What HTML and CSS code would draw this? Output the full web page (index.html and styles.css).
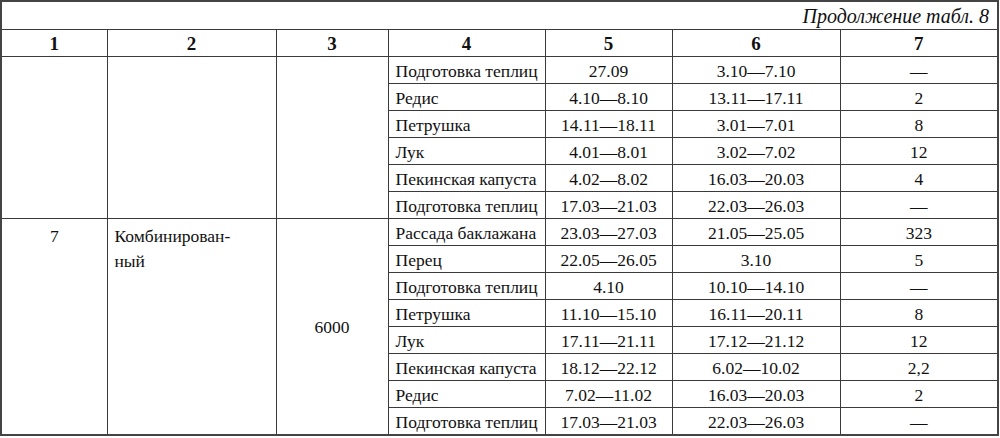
FILE: index.html
```html
<!DOCTYPE html>
<html lang="ru">
<head>
<meta charset="utf-8">
<link rel="stylesheet" href="styles.css">
</head>
<body>
<table class="tbl">
  <colgroup>
    <col class="c1"><col class="c2"><col class="c3"><col class="c4"><col class="c5"><col class="c6"><col class="c7">
  </colgroup>
  <tr class="cap"><td colspan="7">Продолжение табл. 8</td></tr>
  <tr class="head"><th>1</th><th>2</th><th>3</th><th>4</th><th>5</th><th>6</th><th>7</th></tr>
  <tr><td rowspan="6"></td><td rowspan="6"></td><td rowspan="6"></td><td class="name">Подготовка теплиц</td><td>27.09</td><td>3.10—7.10</td><td>—</td></tr>
  <tr><td class="name">Редис</td><td>4.10—8.10</td><td>13.11—17.11</td><td>2</td></tr>
  <tr><td class="name">Петрушка</td><td>14.11—18.11</td><td>3.01—7.01</td><td>8</td></tr>
  <tr><td class="name">Лук</td><td>4.01—8.01</td><td>3.02—7.02</td><td>12</td></tr>
  <tr><td class="name">Пекинская капуста</td><td>4.02—8.02</td><td>16.03—20.03</td><td>4</td></tr>
  <tr><td class="name">Подготовка теплиц</td><td>17.03—21.03</td><td>22.03—26.03</td><td>—</td></tr>
  <tr><td rowspan="8" class="top">7</td><td rowspan="8" class="top name type">Комбинирован-<br>ный</td><td rowspan="8">6000</td><td class="name">Рассада баклажана</td><td>23.03—27.03</td><td>21.05—25.05</td><td>323</td></tr>
  <tr><td class="name">Перец</td><td>22.05—26.05</td><td>3.10</td><td>5</td></tr>
  <tr><td class="name">Подготовка теплиц</td><td>4.10</td><td>10.10—14.10</td><td>—</td></tr>
  <tr><td class="name">Петрушка</td><td>11.10—15.10</td><td>16.11—20.11</td><td>8</td></tr>
  <tr><td class="name">Лук</td><td>17.11—21.11</td><td>17.12—21.12</td><td>12</td></tr>
  <tr><td class="name">Пекинская капуста</td><td>18.12—22.12</td><td>6.02—10.02</td><td>2,2</td></tr>
  <tr><td class="name">Редис</td><td>7.02—11.02</td><td>16.03—20.03</td><td>2</td></tr>
  <tr><td class="name">Подготовка теплиц</td><td>17.03—21.03</td><td>22.03—26.03</td><td>—</td></tr>
</table>
</body>
</html>
```

FILE: styles.css
```css
html, body {
  margin: 0;
  padding: 0;
  background: #fff;
}
.tbl {
  border-collapse: collapse;
  table-layout: fixed;
  width: 998px;
  margin-left: 0;
  font-family: "Liberation Serif", "Times New Roman", serif;
  font-size: 17.5px;
  color: #111;
  border: 2px solid #444;
}
.c1 { width: 106px; }
.c2 { width: 169px; }
.c3 { width: 112px; }
.c4 { width: 157px; }
.c5 { width: 127px; }
.c6 { width: 168px; }
.c7 { width: 158px; }
.tbl td, .tbl th {
  border: 1.5px solid #3a3a3a;
  height: 26px;
  padding: 2px 6px 0;
  text-align: center;
  vertical-align: middle;
  line-height: 24px;
  white-space: nowrap;
  box-sizing: border-box;
}
.tbl .cap td {
  height: 28px;
  text-align: right;
  font-style: italic;
  font-size: 20px;
  padding-right: 8px;
}
.tbl .head th {
  font-weight: bold;
  font-size: 19px;
}
.tbl td.name {
  text-align: left;
  padding-left: 7px;
}
.tbl td.top {
  vertical-align: top;
  padding-top: 5px;
}
.tbl td.type {
  padding-left: 7px;
  line-height: 25px;
}
```
